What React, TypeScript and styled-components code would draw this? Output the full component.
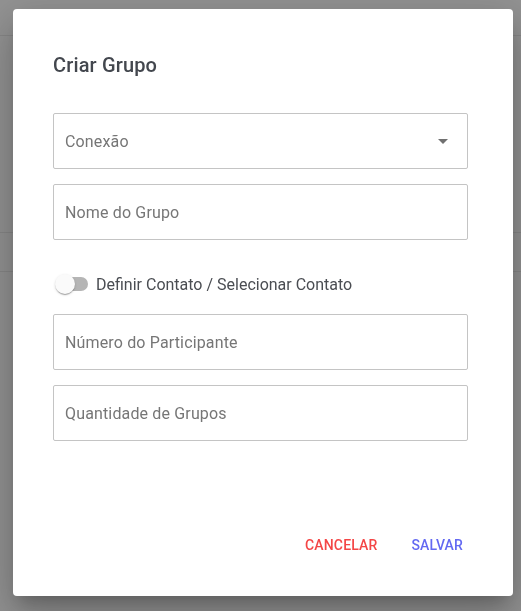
import { useState } from "react";
import styled, { createGlobalStyle } from "styled-components";

const GlobalStyle = createGlobalStyle`
    html, body {
        margin: 0;
        padding: 0;
        background: #939393;
        font-family: Roboto, "Liberation Sans", Arial, sans-serif;
    }
    * {
        box-sizing: border-box;
    }
`;

const PageBehind = styled.div`
    height: 611px;
    overflow: hidden;
    background: #939393;
`;

const HeaderBar = styled.div`
    height: 36px;
    border-bottom: 1px solid #878787;
`;

const TableLine = styled.div<{ $top: number }>`
    margin-top: ${(p) => p.$top}px;
    border-bottom: 1px solid #878787;
`;

const Backdrop = styled.div`
    position: fixed;
    inset: 0;
    display: flex;
    align-items: flex-start;
    padding: 9px 0 0 13px;
`;

const Dialog = styled.div`
    width: 500px;
    height: 587px;
    background: #fff;
    border-radius: 4px;
    box-shadow: 0 11px 15px -7px rgba(0, 0, 0, 0.2),
        0 24px 38px 3px rgba(0, 0, 0, 0.14),
        0 9px 46px 8px rgba(0, 0, 0, 0.12);
    display: flex;
    flex-direction: column;
`;

const Title = styled.h2`
    margin: 0;
    padding: 40px 40px 0 40px;
    font-size: 20px;
    font-weight: 500;
    line-height: 32px;
    color: #43474e;
    letter-spacing: 0.0075em;
`;

const Form = styled.div`
    padding: 32px 45px 0 40px;
    display: flex;
    flex-direction: column;
`;

const Field = styled.div<{ $gap?: number }>`
    height: 56px;
    margin-top: ${(p) => p.$gap ?? 0}px;
    border: 1px solid #c4c4c4;
    border-radius: 2px;
    display: flex;
    align-items: center;
    padding: 0 12px 0 11px;
    font-size: 16px;
    color: #767676;
    letter-spacing: 0.00938em;
`;

const Label = styled.span`
    flex: 1;
`;

const SwitchRow = styled.label`
    display: flex;
    align-items: center;
    height: 38px;
    margin: 25px 0 11px 0;
    cursor: pointer;
    font-size: 16px;
    color: #4a4d52;
`;

const SwitchBox = styled.span`
    position: relative;
    width: 43px;
    height: 38px;
    display: flex;
    align-items: center;
`;

const Track = styled.span<{ $on: boolean }>`
    width: 32px;
    height: 14px;
    margin-left: 3px;
    border-radius: 7px;
    background: ${(p) => (p.$on ? "#a7adf5" : "#b5b5b5")};
`;

const Thumb = styled.span<{ $on: boolean }>`
    position: absolute;
    top: 9px;
    left: ${(p) => (p.$on ? "14px" : "2px")};
    width: 20px;
    height: 20px;
    border-radius: 50%;
    background: ${(p) => (p.$on ? "#6369f2" : "#fafafa")};
    box-shadow: 0 2px 1px -1px rgba(0, 0, 0, 0.2),
        0 1px 1px 0 rgba(0, 0, 0, 0.14),
        0 1px 3px 0 rgba(0, 0, 0, 0.12);
`;

const Actions = styled.div`
    margin-top: auto;
    margin-bottom: 33px;
    padding-right: 42px;
    display: flex;
    justify-content: flex-end;
    gap: 18px;
`;

const ActionButton = styled.button<{ $color: string }>`
    border: none;
    background: transparent;
    padding: 6px 8px;
    min-width: 64px;
    height: 36px;
    font-family: inherit;
    font-size: 14px;
    font-weight: 500;
    letter-spacing: 0.15px;
    text-transform: uppercase;
    color: ${(p) => p.$color};
    cursor: pointer;
    border-radius: 4px;
`;

const ArrowDown = () => (
    <svg width="24" height="24" viewBox="0 0 24 24" fill="#707070">
        <path d="M7 10l5 5 5-5z" />
    </svg>
);

const App = () => {
    const [defineContact, setDefineContact] = useState(false);

    return (
        <>
            <GlobalStyle />
            <PageBehind>
                <HeaderBar />
                <TableLine $top={196} />
                <TableLine $top={38} />
            </PageBehind>
            <Backdrop>
                <Dialog>
                    <Title>Criar Grupo</Title>
                    <Form>
                        <Field>
                            <Label>Conexão</Label>
                            <ArrowDown />
                        </Field>
                        <Field $gap={15}>
                            <Label>Nome do Grupo</Label>
                        </Field>
                        <SwitchRow onClick={() => setDefineContact(!defineContact)}>
                            <SwitchBox>
                                <Track $on={defineContact} />
                                <Thumb $on={defineContact} />
                            </SwitchBox>
                            Definir Contato / Selecionar Contato
                        </SwitchRow>
                        <Field>
                            <Label>Número do Participante</Label>
                        </Field>
                        <Field $gap={15}>
                            <Label>Quantidade de Grupos</Label>
                        </Field>
                    </Form>
                    <Actions>
                        <ActionButton $color="#f44646">Cancelar</ActionButton>
                        <ActionButton $color="#6369f2">Salvar</ActionButton>
                    </Actions>
                </Dialog>
            </Backdrop>
        </>
    );
};

export default App;
